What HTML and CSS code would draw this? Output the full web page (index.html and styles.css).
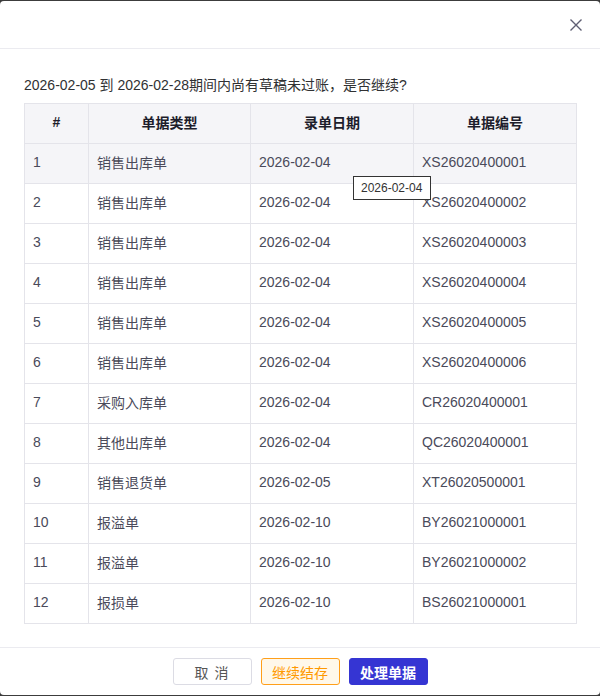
FILE: index.html
```html
<!DOCTYPE html>
<html lang="zh-CN">
<head>
    <meta charset="UTF-8">
    <meta name="viewport" content="width=device-width, initial-scale=1.0">
    <title>草稿单据提示</title>
    <link rel="stylesheet" href="styles.css">
</head>
<body>
    <div class="dialog">
        <div class="dialog-header">
            <button class="close-btn" title="关闭">
                <svg width="14" height="14" viewBox="0 0 14 14">
                    <path d="M1.5 1.5 L12.5 12.5 M12.5 1.5 L1.5 12.5" stroke="#5f5f73" stroke-width="1.4" fill="none"/>
                </svg>
            </button>
        </div>
        <div class="dialog-body">
            <p class="message">2026-02-05 到 2026-02-28期间内尚有草稿未过账，是否继续?</p>
            <div class="table-wrap">
                <table class="bill-table">
                    <colgroup>
                        <col class="col-no">
                        <col class="col-type">
                        <col class="col-date">
                        <col class="col-code">
                    </colgroup>
                    <thead>
                        <tr>
                            <th>#</th>
                            <th>单据类型</th>
                            <th>录单日期</th>
                            <th>单据编号</th>
                        </tr>
                    </thead>
                    <tbody>
                        <tr class="hover"><td>1</td><td>销售出库单</td><td>2026-02-04</td><td>XS26020400001</td></tr>
                        <tr><td>2</td><td>销售出库单</td><td>2026-02-04</td><td>XS26020400002</td></tr>
                        <tr><td>3</td><td>销售出库单</td><td>2026-02-04</td><td>XS26020400003</td></tr>
                        <tr><td>4</td><td>销售出库单</td><td>2026-02-04</td><td>XS26020400004</td></tr>
                        <tr><td>5</td><td>销售出库单</td><td>2026-02-04</td><td>XS26020400005</td></tr>
                        <tr><td>6</td><td>销售出库单</td><td>2026-02-04</td><td>XS26020400006</td></tr>
                        <tr><td>7</td><td>采购入库单</td><td>2026-02-04</td><td>CR26020400001</td></tr>
                        <tr><td>8</td><td>其他出库单</td><td>2026-02-04</td><td>QC26020400001</td></tr>
                        <tr><td>9</td><td>销售退货单</td><td>2026-02-05</td><td>XT26020500001</td></tr>
                        <tr><td>10</td><td>报溢单</td><td>2026-02-10</td><td>BY26021000001</td></tr>
                        <tr><td>11</td><td>报溢单</td><td>2026-02-10</td><td>BY26021000002</td></tr>
                        <tr><td>12</td><td>报损单</td><td>2026-02-10</td><td>BS26021000001</td></tr>
                    </tbody>
                </table>
                <div class="tooltip">2026-02-04</div>
            </div>
        </div>
        <div class="dialog-footer">
            <button class="btn btn-cancel">取 消</button>
            <button class="btn btn-warn">继续结存</button>
            <button class="btn btn-primary">处理单据</button>
        </div>
    </div>
</body>
</html>
```

FILE: styles.css
```css
html, body {
    margin: 0;
    height: 100%;
}
body {
    font-family: "Liberation Sans", Arial, "Noto Sans CJK SC", sans-serif;
    font-size: 14px;
    color: #333;
    background-color: #3c3c3c;
    padding-top: 1px;
    box-sizing: border-box;
}
.dialog {
    background-color: #fff;
    border-radius: 4px;
    height: 694px;
    display: flex;
    flex-direction: column;
}
.dialog-header {
    height: 47px;
    border-bottom: 1px solid #ebebf0;
    display: flex;
    justify-content: flex-end;
    align-items: center;
    padding-right: 17px;
}
.close-btn {
    border: none;
    background: none;
    padding: 0;
    width: 14px;
    height: 14px;
    cursor: pointer;
    margin-top: 1px;
}
.close-btn svg {
    display: block;
}
.dialog-body {
    flex: 1;
    padding: 0 24px;
}
.message {
    margin: 26px 0 0;
    line-height: 20px;
    color: #303133;
}
.table-wrap {
    position: relative;
    margin-top: 8px;
}
.bill-table {
    width: 552px;
    border-collapse: collapse;
    table-layout: fixed;
}
.bill-table th,
.bill-table td {
    border: 1px solid #e4e4ea;
    height: 40px;
    padding: 0 8px 3px;
    text-align: left;
    color: #4a4a5a;
    box-sizing: border-box;
}
.bill-table th {
    background-color: #f5f5f8;
    text-align: center;
    font-weight: bold;
    color: #1d1d2b;
}
.bill-table tr.hover td {
    background-color: #f5f5f8;
}
.col-no { width: 64px; }
.col-type { width: 162px; }
.col-date { width: 163px; }
.col-code { width: 163px; }
.tooltip {
    position: absolute;
    left: 329px;
    top: 73px;
    background-color: #fff;
    border: 1px solid #333;
    font-size: 12px;
    line-height: 22px;
    padding: 0 8px 0 7px;
    color: #333;
}
.dialog-footer {
    height: 48px;
    flex-shrink: 0;
    border-top: 1px solid #ebebf0;
    display: flex;
    justify-content: center;
    align-items: flex-start;
    gap: 9px;
    padding-top: 10px;
    box-sizing: border-box;
}
.btn {
    width: 79px;
    height: 27px;
    border-radius: 3px;
    font-family: inherit;
    font-size: 14px;
    cursor: pointer;
    padding: 0;
}
.btn-cancel {
    background-color: #fff;
    border: 1px solid #dcdce4;
    color: #555;
    letter-spacing: 1px;
}
.btn-warn {
    background-color: #fff8ea;
    border: 1px solid #ff9f1a;
    color: #ff9900;
}
.btn-primary {
    background-color: #3535d3;
    border: 1px solid #3535d3;
    color: #fff;
    font-weight: bold;
}
```
